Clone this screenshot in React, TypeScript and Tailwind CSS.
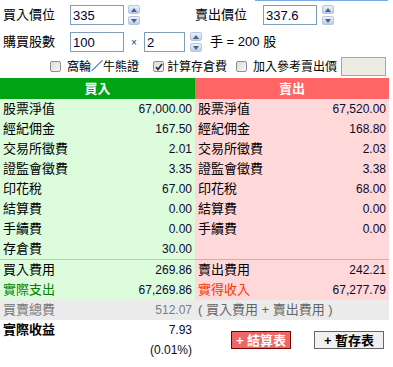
import React from 'react';

const FONT = { fontFamily: '"Liberation Sans", Arial, "Noto Sans CJK TC", sans-serif' };

const Spinner: React.FC = () => (
  <div className="flex flex-col gap-[2px] w-[12px] h-[20px] shrink-0">
    {[0, 1].map((i) => (
      <div
        key={i}
        className="flex-1 flex items-center justify-center rounded-[2px] border border-[#b7c6e0] bg-gradient-to-b from-[#eef3fc] to-[#bccde9]"
      >
        <svg width="6" height="4" viewBox="0 0 6 4">
          {i === 0 ? <path d="M0 4 L3 0 L6 4 Z" fill="#4d6185" /> : <path d="M0 0 L3 4 L6 0 Z" fill="#4d6185" />}
        </svg>
      </div>
    ))}
  </div>
);

const Field: React.FC<{ value: string; width: string }> = ({ value, width }) => (
  <input
    readOnly
    value={value}
    className={`${width} shrink-0 h-[20px] border border-[#7f9db9] bg-white px-[2px] text-[13px] text-[#000033] outline-none`}
    style={FONT}
  />
);

const Check: React.FC<{ checked?: boolean }> = ({ checked }) => (
  <div className="w-[11px] h-[11px] shrink-0 rounded-[2px] border border-[#8e8f8f] bg-gradient-to-br from-[#dcdcdc] to-[#f6f6f6] flex items-center justify-center">
    {checked && (
      <svg width="8" height="8" viewBox="0 0 8 8">
        <path d="M1 4 L3 6.5 L7 1" stroke="#333" strokeWidth="1.8" fill="none" />
      </svg>
    )}
  </div>
);

const Row: React.FC<{ label: string; value: string; side: 'buy' | 'sell'; labelClass?: string }> = ({
  label,
  value,
  side,
  labelClass = 'text-black',
}) => (
  <div
    className={`h-[20px] flex items-center justify-between pl-[3px] pr-[3px] whitespace-nowrap ${side === 'buy' ? 'bg-[#dcfcdc]' : 'bg-[#ffd8d9]'}`}
  >
    <span className={`text-[13px] ${labelClass}`}>{label}</span>
    <span className="text-[12px] text-[#0b0b2e]">{value}</span>
  </div>
);

const buyRows = [
  ['股票淨值', '67,000.00'],
  ['經紀佣金', '167.50'],
  ['交易所徵費', '2.01'],
  ['證監會徵費', '3.35'],
  ['印花稅', '67.00'],
  ['結算費', '0.00'],
  ['手續費', '0.00'],
  ['存倉費', '30.00'],
];

const sellRows = [
  ['股票淨值', '67,520.00'],
  ['經紀佣金', '168.80'],
  ['交易所徵費', '2.03'],
  ['證監會徵費', '3.38'],
  ['印花稅', '68.00'],
  ['結算費', '0.00'],
  ['手續費', '0.00'],
  ['', ''],
];

export default function App() {
  return (
    <div className="w-[393px] h-[367px] bg-white text-black overflow-hidden whitespace-nowrap" style={FONT}>
      <div className="h-px ml-[255px] w-[133px] bg-[#7aa7e6]" />

      {/* price row */}
      <div className="flex items-center h-[20px] mt-[4px] text-[13px]">
        <span className="w-[70px] shrink-0 pl-[3px]">買入價位</span>
        <Field value="335" width="w-[54px]" />
        <div className="ml-[4px]">
          <Spinner />
        </div>
        <span className="ml-[55px] w-[68px] shrink-0">賣出價位</span>
        <Field value="337.6" width="w-[54px]" />
        <div className="ml-[5px]">
          <Spinner />
        </div>
      </div>

      {/* quantity row */}
      <div className="flex items-center h-[20px] mt-[7px] text-[13px]">
        <span className="w-[70px] shrink-0 pl-[3px]">購買股數</span>
        <Field value="100" width="w-[54px]" />
        <span className="w-[20px] shrink-0 text-center text-[10px] text-[#2a3a6a]">×</span>
        <Field value="2" width="w-[41px]" />
        <div className="ml-[5px]">
          <Spinner />
        </div>
        <span className="ml-[8px]">
          手 = <span className="text-[#000033]">200</span> 股
        </span>
      </div>

      {/* options row */}
      <div className="flex items-center h-[19px] mt-[5px] text-[12px]">
        <div className="ml-[50px]">
          <Check />
        </div>
        <span className="ml-[6px] w-[72px] shrink-0">窩輪／牛熊證</span>
        <div className="ml-[14px]">
          <Check checked />
        </div>
        <span className="ml-[3px] w-[60px] shrink-0">計算存倉費</span>
        <div className="ml-[9px]">
          <Check />
        </div>
        <span className="ml-[6px] w-[84px] shrink-0">加入參考賣出價</span>
        <div className="ml-[4px] w-[45px] h-[19px] shrink-0 border border-[#a5a5a5] bg-[#ecebe4]" />
      </div>

      {/* table */}
      <div className="mt-[2px] w-[389px] grid grid-cols-[195px_194px]">
        <div className="h-[21px] bg-[#00a313] text-white font-bold text-[13px] flex items-center justify-center">買入</div>
        <div className="h-[21px] bg-[#ff6565] text-white font-bold text-[13px] flex items-center justify-center">賣出</div>

        <div className="flex flex-col">
          {buyRows.map(([l, v]) => (
            <Row key={l} label={l} value={v} side="buy" />
          ))}
          <div className="h-px bg-[#a9d6ab]" />
          <Row label="買入費用" value="269.86" side="buy" />
          <Row label="實際支出" value="67,269.86" side="buy" labelClass="text-[#008000]" />
        </div>
        <div className="flex flex-col">
          {sellRows.map(([l, v], i) => (
            <Row key={i} label={l} value={v} side="sell" />
          ))}
          <div className="h-px bg-[#d6aab4]" />
          <Row label="賣出費用" value="242.21" side="sell" />
          <Row label="實得收入" value="67,277.79" side="sell" labelClass="text-[#ff3300]" />
        </div>

        <div className="h-[20px] bg-[#ebebeb] flex items-center justify-between pl-[3px] pr-[3px]">
          <span className="text-[13px] text-[#777]">買賣總費</span>
          <span className="text-[12px] text-[#7a7a8a]">512.07</span>
        </div>
        <div className="h-[20px] bg-[#ebebeb] flex items-center pl-[3px]">
          <span className="text-[13px] text-[#666]">( 買入費用 + 賣出費用 )</span>
        </div>

        <div className="flex flex-col">
          <div className="h-[20px] flex items-center justify-between pl-[3px] pr-[3px]">
            <span className="text-[13px] font-bold">實際收益</span>
            <span className="text-[12px] text-[#0b0b2e]">7.93</span>
          </div>
          <div className="h-[20px] flex items-center justify-end pr-[3px]">
            <span className="text-[12px] text-[#0b0b2e]">(0.01%)</span>
          </div>
        </div>
        <div className="flex items-start pt-[11px] pl-[36px] gap-[23px]">
          <button className="w-[60px] h-[18px] border border-[#7a0000] bg-[#ef6666] text-white font-bold text-[13px] leading-none flex items-center justify-center">
            + 結算表
          </button>
          <button className="w-[70px] h-[18px] border border-[#666] bg-[#f0f0f0] text-black font-bold text-[13px] leading-none flex items-center justify-center">
            + 暫存表
          </button>
        </div>
      </div>
    </div>
  );
}
